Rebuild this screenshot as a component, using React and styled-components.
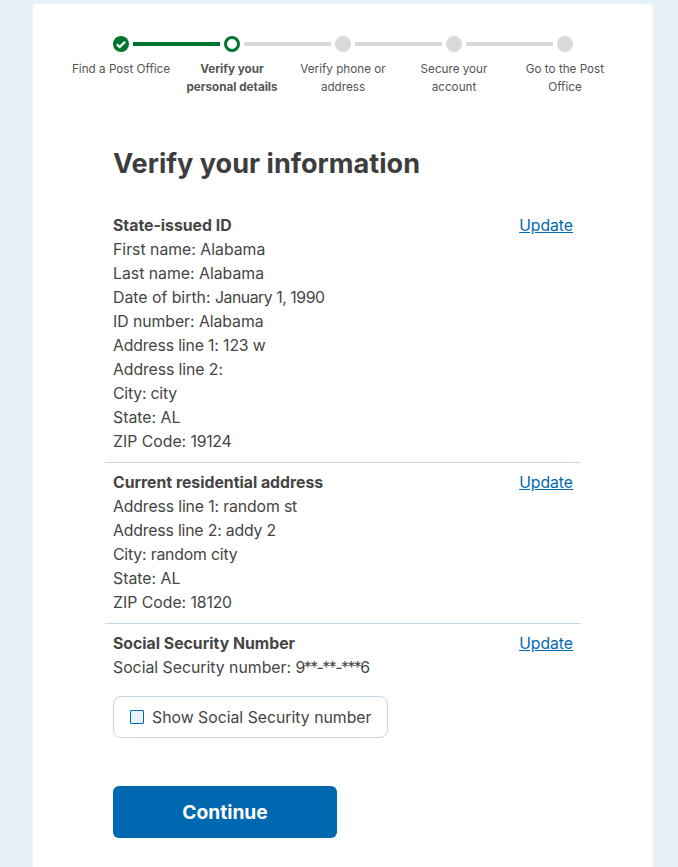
import styled, { createGlobalStyle } from "styled-components";

const steps = [
  { label: "Find a Post Office", state: "done" },
  { label: "Verify your personal details", state: "current" },
  { label: "Verify phone or address", state: "todo" },
  { label: "Secure your account", state: "todo" },
  { label: "Go to the Post Office", state: "todo" },
];

const sections = [
  {
    title: "State-issued ID",
    rows: [
      { label: "First name:", value: "Alabama" },
      { label: "Last name:", value: "Alabama" },
      { label: "Date of birth:", value: "January 1, 1990", tracking: -0.45 },
      { label: "ID number:", value: "Alabama", rowTracking: -0.05 },
      { label: "Address line 1:", value: "123 w", rowTracking: -0.14 },
      { label: "Address line 2:", value: "", rowTracking: -0.08 },
      { label: "City:", value: "city", rowTracking: -0.2 },
      { label: "State:", value: "AL" },
      { label: "ZIP Code:", value: "19124", tracking: -0.3 },
    ],
  },
  {
    title: "Current residential address",
    rows: [
      { label: "Address line 1:", value: "random st", rowTracking: -0.13 },
      { label: "Address line 2:", value: "addy 2", rowTracking: -0.17 },
      { label: "City:", value: "random city", rowTracking: -0.18 },
      { label: "State:", value: "AL" },
      { label: "ZIP Code:", value: "18120", tracking: -0.2 },
    ],
  },
  {
    title: "Social Security Number",
    rows: [{ label: "Social Security number:", value: "9**-**-***6", tracking: -1.5 }],
  },
];

const App = () => {
  return (
    <>
      <GlobalStyle />
      <Card>
        <Stepper>
          {steps.map((step, i) => (
            <Step key={step.label}>
              <Track>
                {i > 0 && <Line $active={step.state !== "todo"} $side="left" />}
                <Dot $state={step.state}>
                  {step.state === "done" && (
                    <svg width="16" height="16" viewBox="0 0 16 16">
                      <path
                        d="M3.9 8.3 L6.7 11 L12.1 5.7"
                        fill="none"
                        stroke="#fff"
                        strokeWidth="2.3"
                      />
                    </svg>
                  )}
                </Dot>
                {i < steps.length - 1 && (
                  <Line $active={step.state === "done"} $side="right" />
                )}
              </Track>
              <StepLabel $current={step.state === "current"}>{step.label}</StepLabel>
            </Step>
          ))}
        </Stepper>
        <Content>
          <Heading>Verify your information</Heading>
          {sections.map((section, i) => (
            <Section key={section.title} $first={i === 0}>
              <div>
                <SectionTitle>{section.title}</SectionTitle>
                {section.rows.map((row) => (
                  <Row key={row.label} $tracking={row.rowTracking}>
                    {row.label} <Value $tracking={row.tracking}>{row.value}</Value>
                  </Row>
                ))}
              </div>
              <UpdateLink href="#">Update</UpdateLink>
            </Section>
          ))}
          <CheckTile>
            <CheckBox />
            Show Social Security number
          </CheckTile>
          <ContinueButton>Continue</ContinueButton>
        </Content>
      </Card>
    </>
  );
};

export default App;

const GlobalStyle = createGlobalStyle`
  html, body {
    margin: 0;
    height: 867px;
    overflow: hidden;
    background: #e7f1fa;
  }
  body {
    font-family: "Inter", "Liberation Sans", sans-serif;
    color: #454545;
  }
`;

const Card = styled.div`
  box-sizing: border-box;
  width: 620px;
  height: 900px;
  margin: 4px 0 0 33px;
  padding: 32px 32.5px 0;
  background: #fff;
  border-radius: 4px 4px 0 0;
`;

const Stepper = styled.div`
  display: flex;
`;

const Step = styled.div`
  flex: 0 0 111px;
  display: flex;
  flex-direction: column;
  align-items: center;
`;

const Track = styled.div`
  position: relative;
  width: 100%;
  height: 16px;
  display: flex;
  justify-content: center;
`;

const Line = styled.div`
  position: absolute;
  top: 6px;
  height: 4px;
  width: 43.5px;
  background: ${(p) => (p.$active ? "#00752f" : "#d9d9d9")};
  ${(p) => (p.$side === "left" ? "left: 0;" : "right: 0;")}
`;

const Dot = styled.div`
  box-sizing: border-box;
  width: 16px;
  height: 16px;
  border-radius: 50%;
  background: ${(p) =>
    p.$state === "done" ? "#00752f" : p.$state === "current" ? "#fff" : "#d9d9d9"};
  border: ${(p) => (p.$state === "current" ? "3px solid #00752f" : "none")};
  svg {
    display: block;
  }
`;

const StepLabel = styled.div`
  width: 104px;
  margin-top: 8px;
  font-size: 11.7px;
  line-height: 18px;
  text-align: center;
  color: #555;
  font-weight: ${(p) => (p.$current ? 700 : 400)};
`;

const Content = styled.div`
  padding: 0 47.5px;
`;

const Heading = styled.h1`
  margin: 50px 0 23px;
  font-size: 27.1px;
  line-height: 36px;
  font-weight: 700;
  color: #3d3d3d;
`;

const Section = styled.div`
  display: flex;
  justify-content: space-between;
  align-items: flex-start;
  margin: 0 -8px;
  padding: 8px 8px 0;
  border-top: ${(p) => (p.$first ? "1px solid transparent" : "1px solid #c5d7e8")};
  & + & {
    margin-top: 8px;
  }
`;

const SectionTitle = styled.div`
  font-size: 15.8px;
  line-height: 24px;
  font-weight: 700;
`;

const Row = styled.div`
  font-size: 15.8px;
  line-height: 24px;
  letter-spacing: ${(p) => p.$tracking || 0}px;
`;

const Value = styled.span`
  ${(p) => (p.$tracking ? `letter-spacing: ${p.$tracking}px;` : "")}
`;

const UpdateLink = styled.a`
  font-size: 15.7px;
  line-height: 24px;
  color: #0067b1;
`;

const CheckTile = styled.label`
  box-sizing: border-box;
  display: flex;
  align-items: center;
  gap: 8px;
  width: 275px;
  height: 42px;
  margin-top: 16px;
  padding-left: 16px;
  border: 1px solid #c5d7e8;
  border-radius: 8px;
  font-size: 15.8px;
`;

const CheckBox = styled.span`
  box-sizing: border-box;
  width: 14px;
  height: 14px;
  background: #eaf3fb;
  border: 1.5px solid #0067b1;
  border-radius: 1px;
`;

const ContinueButton = styled.button`
  display: block;
  width: 224px;
  height: 52px;
  margin-top: 48px;
  border: 0;
  border-radius: 6px;
  background: #0067b1;
  color: #fff;
  font: 700 19.2px "Inter", "Liberation Sans", sans-serif;
`;
